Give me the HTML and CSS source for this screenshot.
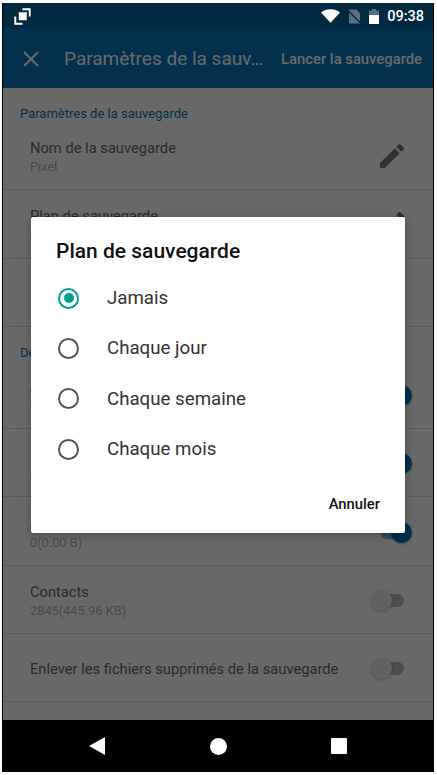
FILE: index.html
```html
<!DOCTYPE html>
<html lang="fr">
<head>
    <meta charset="UTF-8">
    <meta name="viewport" content="width=device-width, initial-scale=1.0">
    <title>Paramètres de la sauvegarde</title>
    <link rel="stylesheet" href="styles.css">
</head>
<body>
    <div class="phone">
        <div class="status-bar">
            <svg class="icon-recents" viewBox="0 0 16 16" width="17" height="17">
                <path d="M4.5 4h7.5v7.5H4.5z" fill="#fff"/>
                <path d="M8 1.2h6.8V8" fill="none" stroke="#fff" stroke-width="1.8"/>
                <path d="M1.2 8v6.8H8" fill="none" stroke="#fff" stroke-width="1.8"/>
            </svg>
            <div class="status-right">
                <svg viewBox="0 0 20 14" width="19" height="14">
                    <path d="M0 3.2C2.8 1 6.2 0 10 0s7.2 1 10 3.2L10 14z" fill="#fff"/>
                </svg>
                <svg viewBox="0 0 14 15" width="13" height="15">
                    <path d="M1 0h8l4 4v11H1z" fill="#5a7080"/>
                    <path d="M0 1l14 14" stroke="#012a42" stroke-width="1.5"/>
                </svg>
                <svg viewBox="0 0 10 15" width="10" height="15">
                    <path d="M3 0h4v1.5h3V15H0V1.5h3z" fill="#5a7080"/>
                    <path d="M0 6h10v9H0z" fill="#fff"/>
                </svg>
                <span class="clock">09:38</span>
            </div>
        </div>

        <div class="app">
            <div class="toolbar">
                <svg class="icon-close" viewBox="0 0 16 16" width="16" height="16">
                    <path d="M1 1l14 14M15 1L1 15" stroke="#fff" stroke-width="2"/>
                </svg>
                <h1 class="toolbar-title">Paramètres de la sauv…</h1>
                <span class="toolbar-action">Lancer la sauvegarde</span>
            </div>

            <div class="content">
                <p class="section-label">Paramètres de la sauvegarde</p>
                <div class="row">
                    <div class="row-text">
                        <p class="row-title">Nom de la sauvegarde</p>
                        <p class="row-sub">Pixel</p>
                    </div>
                    <svg class="icon-edit" viewBox="0 0 24 24" width="32" height="32">
                        <path d="M3 17.25V21h3.75L17.81 9.94l-3.75-3.75L3 17.25zM20.71 7.04a1 1 0 0 0 0-1.41l-2.34-2.34a1 1 0 0 0-1.41 0l-1.83 1.83 3.75 3.75 1.83-1.83z"/>
                    </svg>
                </div>
                <div class="row">
                    <div class="row-text">
                        <p class="row-title">Plan de sauvegarde</p>
                        <p class="row-sub">Jamais</p>
                    </div>
                    <svg class="icon-edit" viewBox="0 0 24 24" width="32" height="32">
                        <path d="M3 17.25V21h3.75L17.81 9.94l-3.75-3.75L3 17.25zM20.71 7.04a1 1 0 0 0 0-1.41l-2.34-2.34a1 1 0 0 0-1.41 0l-1.83 1.83 3.75 3.75 1.83-1.83z"/>
                    </svg>
                </div>
                <div class="row"></div>

                <p class="section-label">Données</p>
                <div class="row">
                    <div class="row-text">
                        <p class="row-title">Applications</p>
                        <p class="row-sub">0(0.00 B)</p>
                    </div>
                    <div class="switch on"><span class="track"></span><span class="thumb"></span></div>
                </div>
                <div class="row">
                    <div class="row-text">
                        <p class="row-title">Messages</p>
                        <p class="row-sub">0(0.00 B)</p>
                    </div>
                    <div class="switch on"><span class="track"></span><span class="thumb"></span></div>
                </div>
                <div class="row">
                    <div class="row-text">
                        <p class="row-title">Journal</p>
                        <p class="row-sub">0(0.00 B)</p>
                    </div>
                    <div class="switch on"><span class="track"></span><span class="thumb"></span></div>
                </div>
                <div class="row">
                    <div class="row-text">
                        <p class="row-title">Contacts</p>
                        <p class="row-sub">2845(445.96 KB)</p>
                    </div>
                    <div class="switch"><span class="track"></span><span class="thumb"></span></div>
                </div>
                <div class="row">
                    <div class="row-text">
                        <p class="row-title">Enlever les fichiers supprimés de la sauvegarde</p>
                    </div>
                    <div class="switch"><span class="track"></span><span class="thumb"></span></div>
                </div>
            </div>

            <div class="scrim">
                <div class="dialog">
                    <h2 class="dialog-title">Plan de sauvegarde</h2>
                    <div class="option"><span class="radio checked"></span>Jamais</div>
                    <div class="option"><span class="radio"></span>Chaque jour</div>
                    <div class="option"><span class="radio"></span>Chaque semaine</div>
                    <div class="option"><span class="radio"></span>Chaque mois</div>
                    <div class="dialog-actions"><span class="dialog-button">Annuler</span></div>
                </div>
            </div>
        </div>

        <div class="nav-bar">
            <svg viewBox="0 0 16 18" width="16" height="18"><path d="M16 0v18L0 9z" fill="#fff"/></svg>
            <span class="nav-home"></span>
            <span class="nav-square"></span>
        </div>
    </div>
</body>
</html>
```

FILE: styles.css
```css
* {
    margin: 0;
    padding: 0;
    box-sizing: border-box;
}

html, body {
    height: 100%;
    background-color: #fff;
}

body {
    font-family: 'Roboto', sans-serif;
    padding: 3px 3px 3px 2px;
    overflow: hidden;
}

.phone {
    width: 432px;
    height: 769px;
    border-left: 1px solid #000;
    border-right: 1px solid #000;
    display: flex;
    flex-direction: column;
    background-color: #000;
}

.status-bar {
    height: 26px;
    flex-shrink: 0;
    background-color: #012a42;
    display: flex;
    align-items: center;
    justify-content: space-between;
    padding: 0 9px 0 11px;
}

.status-right {
    display: flex;
    align-items: center;
    gap: 8px;
}

.clock {
    color: #fff;
    font-size: 14.5px;
    font-weight: 500;
}

.app {
    position: relative;
    height: 691px;
    flex-shrink: 0;
    background-color: #fff;
    overflow: hidden;
}

.toolbar {
    height: 59px;
    background-color: #0575bb;
    display: flex;
    align-items: center;
    justify-content: space-between;
    padding: 0 11px 0 20px;
    color: #fff;
}

.icon-close {
    flex-shrink: 0;
    margin-right: 25px;
}

.toolbar-title {
    flex: 1;
    font-size: 19px;
    font-weight: 400;
    white-space: nowrap;
}

.toolbar-action {
    font-size: 14.8px;
    font-weight: 500;
    white-space: nowrap;
}

.section-label {
    height: 34px;
    padding: 18px 0 0 17px;
    font-size: 13px;
    line-height: 16px;
    color: #0575bb;
}

.row {
    height: 68.3px;
    display: flex;
    align-items: center;
    justify-content: space-between;
    padding: 0 21px 0 27px;
    border-bottom: 1px solid #ddd;
}

.row-text {
    padding-top: 3px;
}

.row-title {
    font-size: 14.7px;
    line-height: 20px;
    color: #666;
}

.row-sub {
    font-size: 12.8px;
    line-height: 18px;
    color: #b5b5b5;
}

.icon-edit {
    fill: #777;
    margin-right: 4px;
}

.switch {
    position: relative;
    width: 41px;
    height: 21px;
    margin-top: 2px;
    display: flex;
    align-items: center;
}

.track {
    position: absolute;
    left: 9px;
    top: 4px;
    width: 24px;
    height: 13px;
    border-radius: 7px;
    background-color: #bbb;
}

.thumb {
    position: relative;
    width: 21px;
    height: 21px;
    border-radius: 50%;
    background-color: #eee;
    box-shadow: 0 1px 3px rgba(0, 0, 0, 0.25);
}

.switch.on {
    justify-content: flex-end;
}

.switch.on .track {
    background-color: #7fb8dc;
}

.switch.on .thumb {
    background-color: #0575bb;
}

.scrim {
    position: absolute;
    inset: 0;
    background-color: rgba(0, 0, 0, 0.59);
    padding: 188px 0 0 28px;
}

.dialog {
    width: 374px;
    height: 316px;
    background-color: #fff;
    border-radius: 2px;
    box-shadow: 0 2px 8px rgba(0, 0, 0, 0.3);
    padding: 0 25px;
}

.dialog-title {
    font-size: 21px;
    font-weight: 500;
    line-height: 24px;
    color: #111;
    padding-top: 22px;
    height: 56px;
}

.option {
    height: 50.3px;
    display: flex;
    align-items: center;
    font-size: 18.7px;
    color: #333;
}

.radio {
    width: 21px;
    height: 21px;
    margin: 0 28px 0 2px;
    border: 2px solid #555;
    border-radius: 50%;
    flex-shrink: 0;
    display: flex;
    align-items: center;
    justify-content: center;
}

.radio.checked {
    border-color: #009e8e;
}

.radio.checked::after {
    content: "";
    width: 10px;
    height: 10px;
    border-radius: 50%;
    background-color: #009e8e;
}

.dialog-actions {
    display: flex;
    justify-content: flex-end;
    padding-top: 20px;
}

.dialog-button {
    font-size: 14.8px;
    font-weight: 500;
    line-height: 20px;
    color: #111;
}

.nav-bar {
    flex: 1;
    display: flex;
    align-items: center;
    padding-left: 86px;
    background-color: #000;
}

.nav-home {
    width: 17px;
    height: 17px;
    margin-left: 105px;
    border-radius: 50%;
    background-color: #fff;
}

.nav-square {
    width: 16px;
    height: 16px;
    margin-left: 104px;
    border-radius: 1px;
    background-color: #fff;
}
```
